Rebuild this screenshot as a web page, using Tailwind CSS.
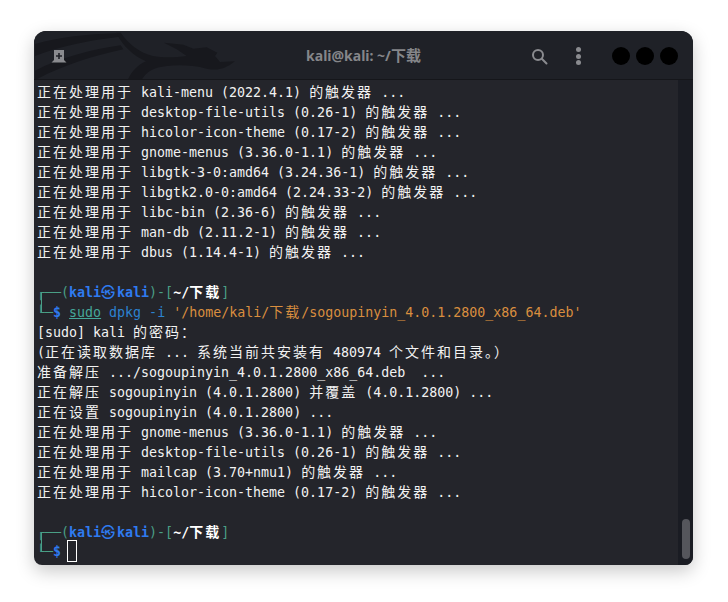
<!DOCTYPE html>
<html lang="zh">
<head>
    <meta charset="UTF-8">
    <title>kali@kali: ~/下载</title>
    <script src="https://cdn.jsdelivr.net/npm/@tailwindcss/browser@4"></script>
</head>
<body class="bg-white w-[728px] h-[602px] overflow-hidden">
    <div class="ml-[34px] mt-[31px] w-[659px] h-[534px] flex flex-col overflow-hidden rounded-t-[12px] rounded-b-[8px] bg-[#24252b] shadow-[0_6px_18px_rgba(0,0,0,0.22)]">
        <!-- Header bar -->
        <div class="relative h-[49px] shrink-0 flex items-center bg-[#1f2127] border-b border-[#15161a] overflow-hidden">
            <!-- Dragon wallpaper -->
            <svg class="absolute left-[-14px] top-[-11px]" width="350" height="120" viewBox="0 0 1050 360" fill="#17181d">
                <path d="M45 72C120 52 200 42 288 40L300 50C210 60 120 78 45 108Z"/>
                <path d="M45 152C125 112 215 88 302 76L310 88C225 106 130 135 50 178L45 178Z"/>
                <path d="M288 38C310 80 340 106 378 124C352 136 335 155 324 178L366 178C378 156 402 142 440 138C480 134 520 136 560 146C590 152 612 150 645 124L600 126L585 108L592 98L560 82L520 86L490 74L432 68L470 88L500 108C470 112 430 114 398 108C360 98 325 72 302 38Z"/>
            </svg>
            <!-- New tab icon -->
            <svg class="absolute left-[17px] top-[19px]" width="16" height="13" viewBox="0 0 16 13">
                <path fill="#8a8b8f" fill-rule="evenodd" d="M3 0H13V10L15.5 12.5H0.5L3 10ZM7.2 3V5.2H5V6.8H7.2V9H8.8V6.8H11V5.2H8.8V3Z"/>
            </svg>
            <div class="relative w-full text-center text-[14px] font-bold text-[#85868a] font-['Noto_Sans','Noto_Sans_CJK_SC',sans-serif]">kali@kali: ~/<span class="text-[15px]">下载</span></div>
            <!-- Search -->
            <svg class="absolute left-[497px] top-[17px]" width="17" height="17" viewBox="0 0 17 17" fill="none" stroke="#8a8b8f" stroke-width="2">
                <circle cx="7" cy="7" r="5"/>
                <path d="M10.8 10.8L15.5 15.5" stroke-linecap="round"/>
            </svg>
            <!-- Menu dots -->
            <div class="absolute left-[542px] top-[16px] flex flex-col gap-[1.5px]">
                <div class="w-[5px] h-[5px] rounded-full bg-[#8a8b8f]"></div>
                <div class="w-[5px] h-[5px] rounded-full bg-[#8a8b8f]"></div>
                <div class="w-[5px] h-[5px] rounded-full bg-[#8a8b8f]"></div>
            </div>
            <!-- Window buttons -->
            <div class="absolute left-[578px] top-[16px] flex gap-[6px]">
                <div class="w-[18px] h-[18px] rounded-full bg-black"></div>
                <div class="w-[18px] h-[18px] rounded-full bg-black"></div>
                <div class="w-[18px] h-[18px] rounded-full bg-black"></div>
            </div>
        </div>

        <div class="flex-1 flex min-h-0">
            <!-- Terminal text -->
            <div class="flex-1 pl-[3px] pt-[2px] text-[13.3px] leading-[20px] text-[#f2f2f2] font-['DejaVu_Sans_Mono','Noto_Sans_CJK_SC',monospace] [&>div]:whitespace-pre [&>div]:h-[20px] [&_b]:font-normal [&_b]:text-[14px] [&_b]:tracking-[2px]">
                <div><b>正在处理用于</b> kali-menu (2022.4.1) <b>的触发器</b> ...</div>
                <div><b>正在处理用于</b> desktop-file-utils (0.26-1) <b>的触发器</b> ...</div>
                <div><b>正在处理用于</b> hicolor-icon-theme (0.17-2) <b>的触发器</b> ...</div>
                <div><b>正在处理用于</b> gnome-menus (3.36.0-1.1) <b>的触发器</b> ...</div>
                <div><b>正在处理用于</b> libgtk-3-0:amd64 (3.24.36-1) <b>的触发器</b> ...</div>
                <div><b>正在处理用于</b> libgtk2.0-0:amd64 (2.24.33-2) <b>的触发器</b> ...</div>
                <div><b>正在处理用于</b> libc-bin (2.36-6) <b>的触发器</b> ...</div>
                <div><b>正在处理用于</b> man-db (2.11.2-1) <b>的触发器</b> ...</div>
                <div><b>正在处理用于</b> dbus (1.14.4-1) <b>的触发器</b> ...</div>
                <div></div>
                <div class="relative text-[#4a9f86]">┌──(<span class="font-bold text-[#2f7bf0]">kali<b>㉿</b>kali</span>)-[<span class="font-bold text-white">~/<b class="!font-bold">下载</b></span>]<span class="absolute left-[4px] top-[10px] w-px h-[20px] bg-[#4a9f86]"></span></div>
                <div class="text-[#4a9f86]">└─<span class="font-bold text-[#2f7bf0]">$</span> <span class="underline text-[#45a89a]">sudo</span> <span class="text-[#2c82cf]">dpkg -i</span> <span class="text-[#d98e3f]">'/home/kali/<b>下载</b>/sogoupinyin_4.0.1.2800_x86_64.deb'</span></div>
                <div>[sudo] kali <b>的密码：</b></div>
                <div>(<b>正在读取数据库</b> ... <b>系统当前共安装有</b> 480974 <b>个文件和目录。）</b></div>
                <div><b>准备解压</b> .../sogoupinyin_4.0.1.2800_x86_64.deb  ...</div>
                <div><b>正在解压</b> sogoupinyin (4.0.1.2800) <b>并覆盖</b> (4.0.1.2800) ...</div>
                <div><b>正在设置</b> sogoupinyin (4.0.1.2800) ...</div>
                <div><b>正在处理用于</b> gnome-menus (3.36.0-1.1) <b>的触发器</b> ...</div>
                <div><b>正在处理用于</b> desktop-file-utils (0.26-1) <b>的触发器</b> ...</div>
                <div><b>正在处理用于</b> mailcap (3.70+nmu1) <b>的触发器</b> ...</div>
                <div><b>正在处理用于</b> hicolor-icon-theme (0.17-2) <b>的触发器</b> ...</div>
                <div></div>
                <div class="relative text-[#4a9f86]">┌──(<span class="font-bold text-[#2f7bf0]">kali<b>㉿</b>kali</span>)-[<span class="font-bold text-white">~/<b class="!font-bold">下载</b></span>]<span class="absolute left-[4px] top-[10px] w-px h-[20px] bg-[#4a9f86]"></span></div>
                <div class="flex items-start text-[#4a9f86]">└─<span class="font-bold text-[#2f7bf0]">$</span><span class="ml-[6px] mt-[-2px] w-[10px] h-[22px] border border-white"></span></div>
            </div>
            <!-- Scrollbar -->
            <div class="w-[15px] shrink-0 bg-[#1a1c23] flex justify-center items-end pb-[6px]">
                <div class="w-[8px] h-[40px] rounded-full bg-[#55565c]"></div>
            </div>
        </div>
    </div>
</body>
</html>
